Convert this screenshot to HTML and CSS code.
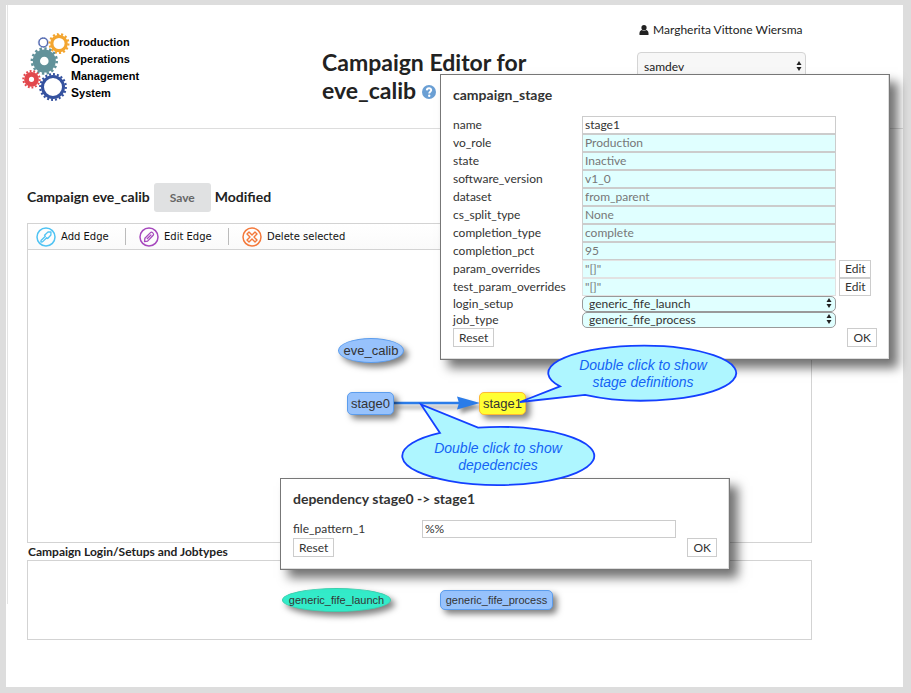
FILE: index.html
```html
<!DOCTYPE html>
<html lang="en">
<head>
<meta charset="utf-8">
<title>Campaign Editor</title>
<link rel="stylesheet" href="styles.css">
</head>
<body>
<svg class="defs" aria-hidden="true">
  <symbol id="sort" viewBox="0 0 6 10"><path d="M3 0 5.500 4H.5zM3 10 .5 6h5z" fill="#222"/></symbol>
</svg>
<main class="page">
  <header class="header">
    <div class="logo">
      <svg class="gears" viewBox="22 32 49 70" aria-hidden="true">
        <g fill="none">
          <circle cx="43.300" cy="42.500" r="4.300" stroke="#5268b0" stroke-width="1.300"/>
          <circle cx="43.300" cy="42.500" r="5" stroke="#5268b0" stroke-width=".8" pathLength="28" stroke-dasharray="1 1"/>
          <g stroke="#f3a52f"><circle cx="59" cy="43.500" r="7.200" stroke-width="3.200"/><circle cx="59" cy="43.500" r="9.400" stroke-width="2.200" pathLength="28" stroke-dasharray="1 1"/></g>
          <g stroke="#62929a"><circle cx="44.300" cy="61" r="7.900" stroke-width="7.200"/><circle cx="44.300" cy="61" r="12.400" stroke-width="2.600" pathLength="32" stroke-dasharray="1 1"/></g>
          <g stroke="#e2484d"><circle cx="31.500" cy="79.300" r="5" stroke-width="4.800"/><circle cx="31.500" cy="79.300" r="8.200" stroke-width="2" pathLength="28" stroke-dasharray="1 1"/></g>
          <g stroke="#35529f"><circle cx="53" cy="87" r="10.500" stroke-width="3"/><circle cx="53" cy="87" r="12.800" stroke-width="2.200" pathLength="40" stroke-dasharray="1 1"/></g>
        </g>
      </svg>
      <div class="logo-text"><span>Production</span><span>Operations</span><span>Management</span><span>System</span></div>
    </div>
    <h1 class="title"><span>Campaign Editor for</span>
      <span>eve_calib
      <svg class="help" viewBox="0 0 14 14" role="img" aria-label="Help"><circle cx="7" cy="7" r="7" fill="#6a9fd4"/><path d="M4.800 5.400C4.900 2.500 9.300 2.600 9.200 5.200 9.100 6.700 7.200 6.700 7.200 8.500" fill="none" stroke="#fff" stroke-width="1.900"/><circle cx="7.200" cy="10.700" r="1.200" fill="#fff"/></svg></span>
    </h1>
    <div class="account">
      <div class="user">
        <svg class="user-icon" viewBox="0 0 10 10" aria-hidden="true"><circle cx="5" cy="2.700" r="2.600" fill="#222"/><path d="M.5 10C.2 7.500.8 5.500 2.700 5c1.400 1 3.200 1 4.600 0 1.900.5 2.500 2.500 2.200 5z" fill="#222"/></svg>
        Margherita Vittone Wiersma
      </div>
      <div class="picker experiment">
        <select aria-label="Experiment"><option>samdev</option></select>
        <svg class="sort"><use href="#sort"/></svg>
      </div>
    </div>
  </header>

  <section class="workspace">
    <div class="campaign-bar">
      <h2>Campaign eve_calib</h2>
      <button class="save" type="button">Save</button>
      <h2>Modified</h2>
    </div>
    <div class="editor">
      <div class="toolbar">
        <button type="button">
          <svg viewBox="0 0 20 20" fill="none" stroke="#4fc3f3" aria-hidden="true"><circle cx="10" cy="10" r="9" stroke-width="1.500"/><path d="M5 13.500 9.300 9.200 8.500 8.200 12 5 15 4.800 14.900 8 11.700 11.500 10.700 10.700 6.500 14.900 4.900 15z" stroke-width="1.300" stroke-linejoin="round"/></svg>
          Add Edge</button>
        <button type="button">
          <svg viewBox="0 0 20 20" fill="none" stroke="#a648bd" aria-hidden="true"><circle cx="10" cy="10" r="9" stroke-width="1.500"/><path d="M5.500 14.500 5.900 11.300 11.500 5.600C12.800 4.300 15.500 6.800 14.200 8.300L8.600 14.100zM7.900 12 12.300 7.600" stroke-width="1.300" stroke-linejoin="round"/></svg>
          Edit Edge</button>
        <button type="button">
          <svg viewBox="0 0 20 20" fill="none" stroke="#f4793b" aria-hidden="true"><circle cx="10" cy="10" r="9" stroke-width="1.500"/><path d="M7 5 10 8 13 5 15 7 12 10 15 13 13 15 10 12 7 15 5 13 8 10 5 7z" stroke-width="1.400" stroke-linejoin="round"/></svg>
          Delete selected</button>
      </div>
      <div class="canvas stages">
        <svg class="edge" viewBox="0 0 86 22" aria-hidden="true"><path d="M0 8H68" stroke="#2b7ce9" stroke-width="2.500"/><path d="M63 1.500 86 8 63 14.500 65 8z" fill="#2b7ce9"/></svg>
        <div class="node ellipse campaign">eve_calib</div>
        <div class="node stage0">stage0</div>
        <div class="node stage1">stage1</div>
      </div>
    </div>
    <h3>Campaign Login/Setups and Jobtypes</h3>
    <div class="canvas setups">
      <div class="node ellipse small launch">generic_fife_launch</div>
      <div class="node small process">generic_fife_process</div>
    </div>
  </section>

  <form class="dialog stage-dialog">
    <h2>campaign_stage</h2>
    <div class="fields">
      <label for="name">name</label><input id="name" value="stage1">
      <label for="vo">vo_role</label><input id="vo" class="default" value="Production">
      <label for="state">state</label><input id="state" class="default" value="Inactive">
      <label for="version">software_version</label><input id="version" class="default" value="v1_0">
      <label for="dataset">dataset</label><input id="dataset" class="default" value="from_parent">
      <label for="split">cs_split_type</label><input id="split" class="default" value="None">
      <label for="ctype">completion_type</label><input id="ctype" class="default" value="complete">
      <label for="cpct">completion_pct</label><input id="cpct" class="default" value="95">
      <label for="params">param_overrides</label><input id="params" class="default pale" value='"[]"'><button type="button">Edit</button>
      <label for="tparams">test_param_overrides</label><input id="tparams" class="default pale" value='"[]"'><button type="button">Edit</button>
      <label for="login">login_setup</label><div class="picker"><select id="login"><option>generic_fife_launch</option></select><svg class="sort"><use href="#sort"/></svg></div>
      <label for="job">job_type</label><div class="picker"><select id="job"><option>generic_fife_process</option></select><svg class="sort"><use href="#sort"/></svg></div>
    </div>
    <div class="actions"><button type="reset">Reset</button><button type="button">OK</button></div>
  </form>

  <form class="dialog dependency-dialog">
    <h2>dependency stage0 -&gt; stage1</h2>
    <div class="fields">
      <label for="pattern">file_pattern_1</label><input id="pattern" value="%%">
    </div>
    <div class="actions"><button type="reset">Reset</button><button type="button">OK</button></div>
  </form>

  <div class="callout stage-callout">
    <svg viewBox="518 344 222 60" aria-hidden="true"><path d="M560 386.400 520 402 585 394.900A94 27.500 0 1 0 560 386.400z"/></svg>
    <p>Double click to show<br>stage definitions</p>
  </div>
  <div class="callout dependency-callout">
    <svg viewBox="400 402 196 86" aria-hidden="true"><path d="M440 432.900 421 404.500 478 427.600A96 29 0 1 1 440 432.900z"/></svg>
    <p>Double click to show<br>depedencies</p>
  </div>
</main>
</body>
</html>
```
FILE: styles.css
```css
* { box-sizing: border-box; }

body {
  margin: 0;
  padding: 5px 8px 6px 6px;
  background: #ddd;
  color: #222;
  font: 12px/18px Lato, sans-serif;
}

h1, h2, h3, p { margin: 0; }
button, input, select { font: inherit; color: inherit; margin: 0; }
svg { display: block; flex: none; }
.defs { position: absolute; width: 0; height: 0; }

.page {
  position: relative;
  min-height: calc(100vh - 11px);
  background: #fff;
}

.page::before {
  content: "";
  position: absolute;
  left: 1px;
  top: 0;
  height: 599px;
  border-left: 1px solid #e4e4e4;
}

/* Header */
.header {
  display: grid;
  grid-template-columns: 303fr 315fr 266fr;
  min-height: 124px;
  margin-left: 13px;
  border-bottom: 1px solid #ddd;
}

.logo { display: flex; padding: 27px 0 0 3px; }
.gears { width: 49px; height: 70px; }
.logo-text {
  display: flex;
  flex-direction: column;
  padding-top: 2px;
  color: #000;
  font: bold 11px/17px "Liberation Sans", sans-serif;
}
.logo-text span::first-letter { font-size: 12px; line-height: 12px; }

.title {
  display: flex;
  flex-direction: column;
  align-items: flex-start;
  padding-top: 43px;
  font-size: 23px;
  line-height: 28px;
}
.help { display: inline-block; width: 14px; height: 14px; }

.account { padding-top: 16px; }
.user { display: flex; align-items: center; gap: 4px; padding-left: 2px; }
.user-icon { width: 10px; height: 10px; }

.picker { position: relative; }
.picker select { width: 100%; appearance: none; }
.sort { position: absolute; top: 2px; right: 4px; width: 6px; height: 10px; pointer-events: none; }

.experiment { width: 169px; margin-top: 13px; }
.experiment select {
  height: 30px;
  padding: 0 6px;
  border: 1px solid #d4d4d4;
  border-radius: 4px;
  background: #f7f7f7;
}
.experiment .sort { top: 9px; }

/* Workspace */
.workspace { padding: 54px 91px 47px 21px; }

.campaign-bar { display: flex; align-items: center; gap: 4px; margin-bottom: 11px; }
.campaign-bar h2, .dialog h2 { font-size: 14px; line-height: 18px; }
.campaign-bar h2 { padding-bottom: 2px; }

.save {
  width: 57px;
  height: 29px;
  border: 0;
  border-radius: 3px;
  background: #e0e1e2;
  color: #666;
  font-weight: bold;
}

.editor, .setups { border: 1px solid #d3d3d3; }

.toolbar {
  display: flex;
  height: 26px;
  align-items: center;
  padding-left: 8px;
  border-bottom: 1px solid #d3d3d3;
  background: linear-gradient(#fff, #fafafa);
}
.toolbar button {
  display: flex;
  align-items: center;
  gap: 5px;
  height: 17px;
  width: 103px;
  padding: 0 0 0 13px;
  border: 0;
  border-left: 1px solid #bbb;
  background: none;
  color: #111;
  font: 10px/17px "DejaVu Sans", sans-serif;
  white-space: nowrap;
}
.toolbar button:first-child { width: 89px; padding-left: 0; border: 0; }
.toolbar svg { width: 20px; height: 20px; }

.canvas { position: relative; }
.stages { height: 292px; }
.setups { height: 80px; }
.workspace h3 { font-size: 12px; line-height: 17px; padding-left: 1px; }

.node {
  position: absolute;
  display: flex;
  align-items: center;
  justify-content: center;
  width: 47px;
  height: 23px;
  border: 1px solid #5c9ded;
  border-radius: 5px;
  background: #97c2fc;
  box-shadow: 4px 4px 6px rgba(0, 0, 0, .5);
  color: #333;
  font: 13px/16px "Liberation Sans", sans-serif;
}
.node.small { font-size: 11px; }
.node.ellipse { border-radius: 50%; }
.campaign { left: 310px; top: 88px; width: 66px; height: 25px; }
.stage0 { left: 319px; top: 142px; }
.stage1 { left: 451px; top: 142px; background: #ffff33; border-color: #ffb931; }
.launch { left: 254px; top: 27px; width: 109px; height: 24px; background: #33ebc9; border-color: #3bcfae; }
.process { left: 412px; top: 29px; width: 113px; height: 20px; }
.edge {
  position: absolute;
  left: 366px;
  top: 145px;
  width: 86px;
  height: 22px;
  overflow: visible;
  filter: drop-shadow(3px 4px 2px rgba(0, 0, 0, .45));
}

/* Dialogs */
.dialog {
  position: absolute;
  width: 450px;
  padding: 11px 12px 12px;
  border: 1px solid #777;
  background: #fff;
  box-shadow: inset -1px -1px #ddd, 8px 8px 10px rgba(0, 0, 0, .55);
  color: #333;
}
.stage-dialog { left: 434px; top: 69px; }
.dependency-dialog { left: 274px; top: 473px; }

.fields {
  display: grid;
  grid-template-columns: 129px 254px 32px;
  margin-top: 12px;
}
.fields label { grid-column: 1; }
.fields input {
  width: 100%;
  height: 18px;
  padding: 0 2px;
  border: 1px solid #ccc;
  background: #fff;
}
.fields .default { background: #e0ffff; color: #777; }
.fields .pale { border-color: #e2e2e2; }
.fields button { margin-left: 3px; width: 32px; }
.fields select {
  display: block;
  height: 16px;
  padding: 0 6px;
  border: 1px solid #999;
  border-radius: 5px;
  background: #e0ffff;
  line-height: 14px;
}
.fields label:has(+ .picker) { line-height: 16px; }
.dialog button {
  height: 19px;
  padding: 0 5px;
  border: 1px solid #ccc;
  background: #fff;
  line-height: 16px;
}
.dialog .fields button { height: 18px; }
.actions { display: flex; justify-content: space-between; }

/* Callouts */
.callout {
  position: absolute;
  color: #1463f5;
  font: italic 14px/17px "Liberation Sans", sans-serif;
  text-align: center;
}
.callout path { fill: #aef6ff; stroke: #1440ff; stroke-width: 1.8; stroke-linejoin: miter; }
.callout p { position: absolute; width: 100%; }
.stage-callout { left: 512px; top: 339px; width: 222px; }
.stage-callout p { top: 13px; padding-left: 28px; }
.dependency-callout { left: 394px; top: 397px; width: 196px; }
.dependency-callout p { top: 38px; }
```
